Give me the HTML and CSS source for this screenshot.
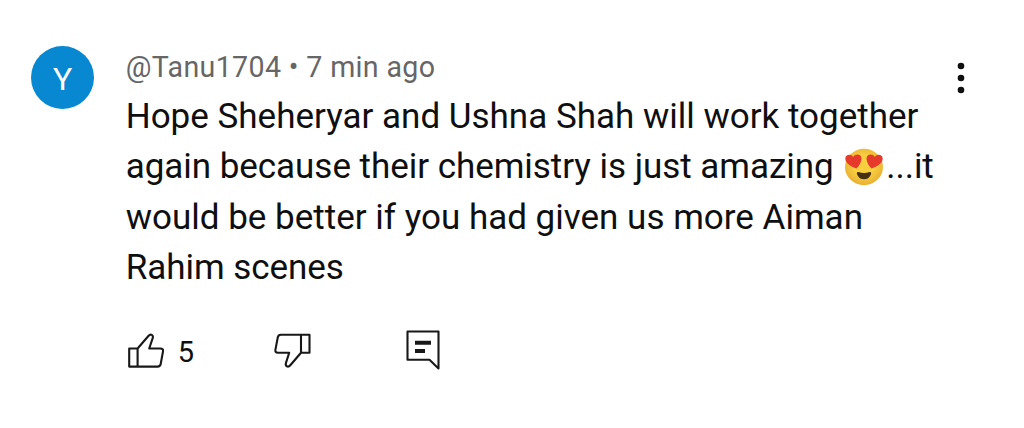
FILE: index.html
```
<!DOCTYPE html>
<html lang="en">
<head>
  <meta charset="UTF-8">
  <meta name="viewport" content="width=device-width, initial-scale=1.0">
  <title>Comment</title>
  <link rel="stylesheet" href="styles.css">
</head>
<body>
<div class="comment">
  <div class="avatar">Y</div>
  <div class="content">
    <div class="meta">@Tanu1704 • 7 min ago</div>
    <div class="text">
      <span class="line">Hope Sheheryar and Ushna Shah will work together</span>
      <span class="line tight">again because their chemistry is just amazing <svg class="emoji" viewBox="0 0 40 40" role="img" aria-label="heart eyes">
        <defs>
          <radialGradient id="face" cx="50%" cy="45%" r="55%">
            <stop offset="0.5" stop-color="#f8cf3e"/>
            <stop offset="1" stop-color="#e9b035"/>
          </radialGradient>
        </defs>
        <ellipse cx="20" cy="20" rx="19" ry="18.2" fill="url(#face)"/>
        <path fill="#e53a2c" d="M12.5 21.5C7.5 20 1.5 16.3 1.3 11.8C1.2 7.4 7 6.4 9.2 10C11.4 6.2 17.8 7 17.5 12C17.2 15.5 15 19 12.5 21.5Z"/>
        <path fill="#e53a2c" d="M27.5 21.5C32.5 20 38.5 16.3 38.7 11.8C38.8 7.4 33 6.4 30.8 10C28.6 6.2 22.2 7 22.5 12C22.8 15.5 25 19 27.5 21.5Z"/>
        <path fill="#453014" d="M14.5 25Q20 27 25.5 25C27 24.6 27.5 25.8 26.9 27.4C25.6 30.6 23 32.3 20 32.3S14.4 30.6 13.1 27.4C12.5 25.8 13 24.6 14.5 25Z"/>
      </svg>...it</span>
      <span class="line">would be better if you had given us more Aiman</span>
      <span class="line tight">Rahim scenes</span>
    </div>
    <div class="actions">
      <svg class="icon like" viewBox="0 0 38 38">
        <path d="M3.2 15.5H11.6V33.6H3.2ZM11.6 15.5L22.4 3C24.8 0.3 27.6 2.2 26.7 5.2L23.2 15.5H34.4Q37.5 15.5 37 18.4L34.7 31Q34.2 33.6 31.6 33.6H11.6"/>
      </svg>
      <span class="count">5</span>
      <svg class="icon dislike" viewBox="0 0 38 38">
        <path d="M36.5 1.7V19.8H28V1.7ZM28 19.8L17.3 32.3C14.9 35 12.1 33.1 12.9 30.1L16.2 19.8H5Q1.9 19.8 2.4 16.9L4.8 4.3Q5.3 1.7 7.9 1.7H28"/>
      </svg>
      <svg class="icon reply" viewBox="0 0 36 42">
        <path d="M2.5 2.5H33.5V39.5L24.5 30.8H2.5Z"/>
        <path class="bar" d="M10 13.8H26M10 22H20"/>
      </svg>
    </div>
  </div>
  <svg class="menu" viewBox="0 0 8 32">
    <circle cx="4" cy="4" r="3.3"/>
    <circle cx="4" cy="16" r="3.3"/>
    <circle cx="4" cy="28" r="3.3"/>
  </svg>
</div>
</body>
</html>
```

FILE: styles.css
```
body {
  margin: 0;
  background-color: #fff;
  color: #0f0f0f;
  font-family: Roboto, Arial, sans-serif;
}
.comment {
  display: flex;
  align-items: flex-start;
  box-sizing: border-box;
  height: 428px;
  padding: 46px 59px 0 31px;
}
.avatar {
  width: 63px;
  height: 63px;
  border-radius: 50%;
  background-color: #0788d1;
  color: #fff;
  font-size: 32px;
  line-height: 66px;
  text-align: center;
}
.content {
  flex: 1;
  margin-left: 31.7px;
}
.meta {
  color: #666;
  font-size: 28.6px;
  line-height: 42px;
  letter-spacing: 0.35px;
}
.text {
  margin-top: 4px;
  font-size: 35px;
  line-height: 50.3px;
}
.line {
  display: block;
  white-space: nowrap;
}
.tight {
  letter-spacing: -0.04px;
}
.emoji {
  width: 40px;
  height: 40px;
  margin: 0 2px;
  vertical-align: -8.5px;
}
.actions {
  display: flex;
  align-items: flex-start;
  margin-top: 36px;
}
.icon {
  fill: none;
  stroke: #181818;
  stroke-width: 2.1;
  stroke-linejoin: round;
}
.like, .dislike {
  width: 38px;
  height: 38px;
  margin-top: 4px;
}
.count {
  width: 18px;
  margin: 4px 0 0 14px;
  font-size: 29px;
  line-height: 38px;
}
.dislike {
  margin-left: 77.3px;
}
.reply {
  width: 36px;
  height: 42px;
  margin-left: 94px;
}
.reply .bar {
  stroke-width: 4;
}
.menu {
  width: 8px;
  height: 32px;
  margin-top: 16px;
  fill: #0f0f0f;
}
```
